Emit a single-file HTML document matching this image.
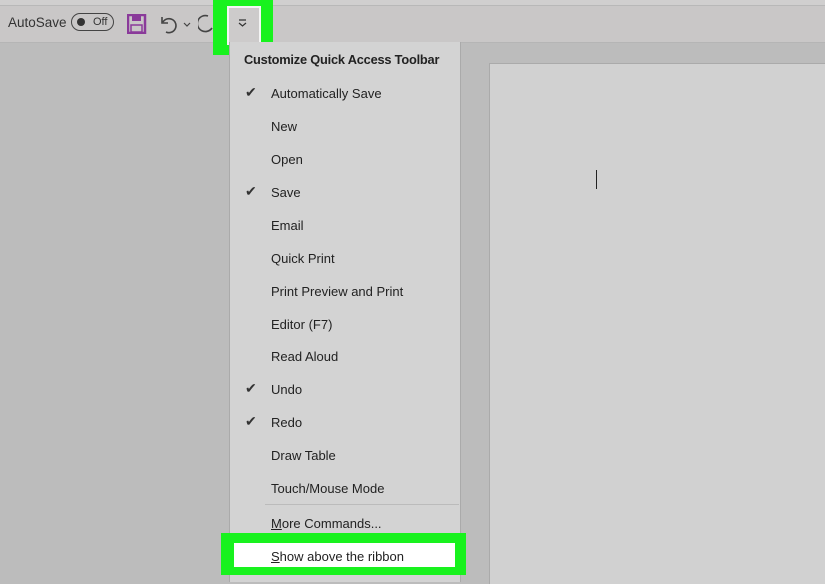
<!DOCTYPE html><html><head><style>
body{margin:0;width:825px;height:575px;overflow:hidden;background:#bcbcbc;font-family:"Liberation Sans",sans-serif;position:relative}
.a{position:absolute}
.it{position:absolute;left:271px;font-size:13px;color:#222}
.ck{position:absolute;left:245px;font-size:14px;color:#333}
</style></head><body>
<div class="a" style="left:0;top:0;width:825px;height:5px;background:#d0cfcf;border-bottom:1px solid #b8b8b8"></div>
<div class="a" style="left:0;top:6px;width:825px;height:36px;background:#c9c7c7;border-bottom:1px solid #b5b5b5"></div>
<div class="a" style="left:8px;top:15px;font-size:13.5px;color:#333">AutoSave</div>
<div class="a" style="left:71px;top:13px;width:41px;height:16px;border:1.5px solid #444;border-radius:9px"></div>
<div class="a" style="left:77px;top:18px;width:8px;height:8px;border-radius:50%;background:#333"></div>
<div class="a" style="left:93px;top:16px;font-size:11px;color:#333">Off</div>
<svg class="a" style="left:127px;top:14px" width="20" height="20"><rect x="1" y="1" width="17" height="18" fill="none" stroke="#8a3a9a" stroke-width="2.5"/><rect x="5" y="2" width="9" height="5" fill="#8a3a9a"/><rect x="4" y="11" width="11" height="7" fill="none" stroke="#8a3a9a" stroke-width="1.5"/></svg>
<svg class="a" style="left:158px;top:13px" width="40" height="22"><path d="M4 4v6h6M5 9a7 7 0 1 1 3 10" fill="none" stroke="#444" stroke-width="1.6"/><path d="M26 10l3 3 3-3" fill="none" stroke="#444" stroke-width="1.2"/></svg>
<svg class="a" style="left:198px;top:13px" width="16" height="22"><path d="M10 3a8 8 0 1 0 4 12" fill="none" stroke="#444" stroke-width="1.6"/></svg>
<div class="a" style="left:213px;top:0;width:60px;height:55px;background:#18f21e"></div>
<div class="a" style="left:227px;top:6px;width:30px;height:35px;background:#cdcbcb;border:2px solid #f4f4f4"></div>
<svg class="a" style="left:237px;top:18px" width="12" height="10"><path d="M2 2h7M2 5l3.5 3L9 5" fill="none" stroke="#333" stroke-width="1.2"/></svg>
<div class="a" style="left:489px;top:63px;width:340px;height:520px;background:#d1d1d1;border-top:1px solid #aaa;border-left:1px solid #aaa"></div>
<div class="a" style="left:596px;top:170px;width:1px;height:19px;background:#222"></div>
<div class="a" style="left:229px;top:42px;width:230px;height:540px;background:#d3d3d3;border-left:1px solid #aaa;border-right:1px solid #aaa"></div>
<div class="a" style="left:244px;top:52px;font-size:12.8px;font-weight:bold;color:#222;letter-spacing:-0.2px">Customize Quick Access Toolbar</div>
<div class="ck" style="top:84px">✔</div><div class="it" style="top:86px">Automatically Save</div>
<div class="it" style="top:119px">New</div>
<div class="it" style="top:152px">Open</div>
<div class="ck" style="top:183px">✔</div><div class="it" style="top:185px">Save</div>
<div class="it" style="top:218px">Email</div>
<div class="it" style="top:251px">Quick Print</div>
<div class="it" style="top:284px">Print Preview and Print</div>
<div class="it" style="top:317px">Editor (F7)</div>
<div class="it" style="top:349px">Read Aloud</div>
<div class="ck" style="top:380px">✔</div><div class="it" style="top:382px">Undo</div>
<div class="ck" style="top:413px">✔</div><div class="it" style="top:415px">Redo</div>
<div class="it" style="top:448px">Draw Table</div>
<div class="it" style="top:481px">Touch/Mouse Mode</div>
<div class="a" style="left:265px;top:504px;width:194px;height:1px;background:#bbb"></div>
<div class="it" style="top:516px"><u>M</u>ore Commands...</div>
<div class="a" style="left:221px;top:533px;width:245px;height:42px;background:#18f21e"></div>
<div class="a" style="left:234px;top:543px;width:221px;height:24px;background:#fff"></div>
<div class="it" style="top:549px"><u>S</u>how above the ribbon</div>
</body></html>
